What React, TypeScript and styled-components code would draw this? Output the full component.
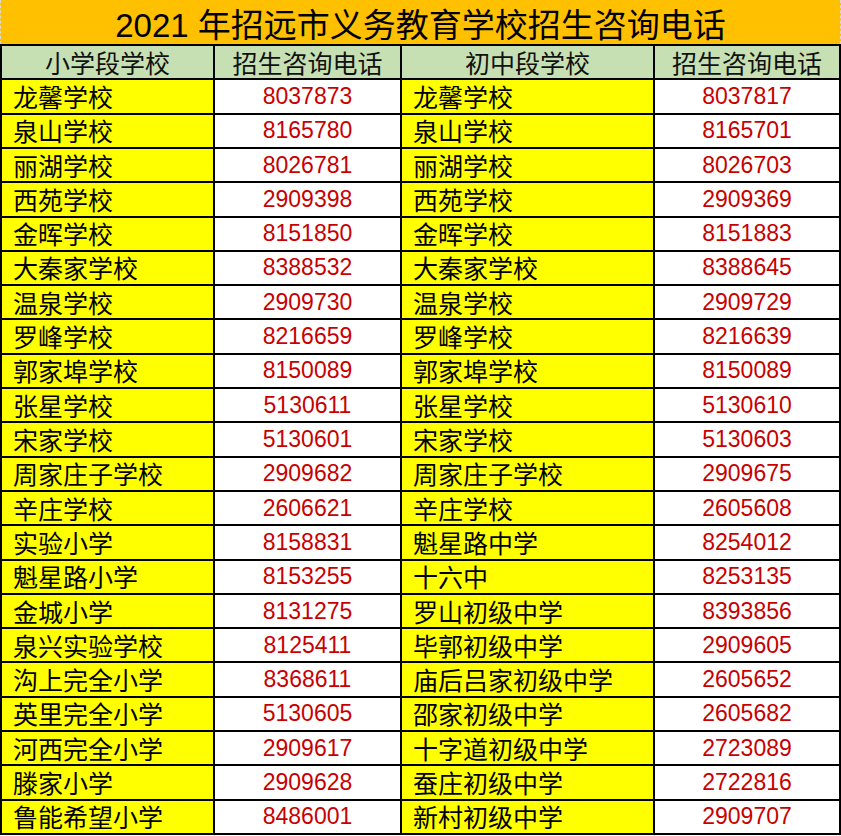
import React from "react";
import styled, { createGlobalStyle } from "styled-components";

const GlobalStyle = createGlobalStyle`
  html, body {
    margin: 0;
    padding: 0;
    background: #ffffff;
  }
  body {
    font-family: "Liberation Sans", "Noto Sans CJK SC", sans-serif;
  }
`;

type Row = {
  primary: string;
  primaryTel: string;
  middle: string;
  middleTel: string;
};

const rows: Row[] = [
  { primary: "龙馨学校", primaryTel: "8037873", middle: "龙馨学校", middleTel: "8037817" },
  { primary: "泉山学校", primaryTel: "8165780", middle: "泉山学校", middleTel: "8165701" },
  { primary: "丽湖学校", primaryTel: "8026781", middle: "丽湖学校", middleTel: "8026703" },
  { primary: "西苑学校", primaryTel: "2909398", middle: "西苑学校", middleTel: "2909369" },
  { primary: "金晖学校", primaryTel: "8151850", middle: "金晖学校", middleTel: "8151883" },
  { primary: "大秦家学校", primaryTel: "8388532", middle: "大秦家学校", middleTel: "8388645" },
  { primary: "温泉学校", primaryTel: "2909730", middle: "温泉学校", middleTel: "2909729" },
  { primary: "罗峰学校", primaryTel: "8216659", middle: "罗峰学校", middleTel: "8216639" },
  { primary: "郭家埠学校", primaryTel: "8150089", middle: "郭家埠学校", middleTel: "8150089" },
  { primary: "张星学校", primaryTel: "5130611", middle: "张星学校", middleTel: "5130610" },
  { primary: "宋家学校", primaryTel: "5130601", middle: "宋家学校", middleTel: "5130603" },
  { primary: "周家庄子学校", primaryTel: "2909682", middle: "周家庄子学校", middleTel: "2909675" },
  { primary: "辛庄学校", primaryTel: "2606621", middle: "辛庄学校", middleTel: "2605608" },
  { primary: "实验小学", primaryTel: "8158831", middle: "魁星路中学", middleTel: "8254012" },
  { primary: "魁星路小学", primaryTel: "8153255", middle: "十六中", middleTel: "8253135" },
  { primary: "金城小学", primaryTel: "8131275", middle: "罗山初级中学", middleTel: "8393856" },
  { primary: "泉兴实验学校", primaryTel: "8125411", middle: "毕郭初级中学", middleTel: "2909605" },
  { primary: "沟上完全小学", primaryTel: "8368611", middle: "庙后吕家初级中学", middleTel: "2605652" },
  { primary: "英里完全小学", primaryTel: "5130605", middle: "邵家初级中学", middleTel: "2605682" },
  { primary: "河西完全小学", primaryTel: "2909617", middle: "十字道初级中学", middleTel: "2723089" },
  { primary: "滕家小学", primaryTel: "2909628", middle: "蚕庄初级中学", middleTel: "2722816" },
  { primary: "鲁能希望小学", primaryTel: "8486001", middle: "新村初级中学", middleTel: "2909707" },
];

const Sheet = styled.div`
  width: 841px;
  height: 836px;
  display: flex;
  flex-direction: column;
`;

const Title = styled.div`
  height: 44px;
  box-sizing: border-box;
  background: #ffc000;
  border-left: 1px dashed #d9d9d9;
  border-right: 1px dashed #d9d9d9;
  display: flex;
  align-items: center;
  justify-content: center;
  font-family: "Liberation Sans", "Noto Sans CJK SC", sans-serif;
  font-size: 33px;
  color: #000000;
  padding-top: 1px;
`;

const Grid = styled.div`
  flex: 1;
  display: grid;
  grid-template-columns: 211px 185px 251px 184px;
  grid-auto-rows: 1fr;
  gap: 2px;
  padding: 2px;
  margin-bottom: 1px;
  background: #000000;
`;

const HeadCell = styled.div`
  background: #c6e0b4;
  display: flex;
  align-items: center;
  justify-content: center;
  font-family: "Noto Sans CJK SC", sans-serif;
  font-size: 25px;
  color: #111111;
  line-height: 1;
`;

const NameCell = styled.div`
  background: #ffff00;
  display: flex;
  align-items: center;
  padding-left: 11px;
  font-family: "Noto Sans CJK SC", sans-serif;
  font-size: 25px;
  color: #000000;
  line-height: 1;
  white-space: nowrap;
`;

const TelCell = styled.div`
  background: #ffffff;
  display: flex;
  align-items: center;
  justify-content: center;
  font-family: "Liberation Sans", sans-serif;
  font-size: 23px;
  color: #c80000;
  line-height: 1;
`;

export default function App() {
  return (
    <>
      <GlobalStyle />
      <Sheet>
        <Title>2021 年招远市义务教育学校招生咨询电话</Title>
        <Grid>
          <HeadCell>小学段学校</HeadCell>
          <HeadCell>招生咨询电话</HeadCell>
          <HeadCell>初中段学校</HeadCell>
          <HeadCell>招生咨询电话</HeadCell>
          {rows.map((r, i) => (
            <React.Fragment key={i}>
              <NameCell>{r.primary}</NameCell>
              <TelCell>{r.primaryTel}</TelCell>
              <NameCell>{r.middle}</NameCell>
              <TelCell>{r.middleTel}</TelCell>
            </React.Fragment>
          ))}
        </Grid>
      </Sheet>
    </>
  );
}
